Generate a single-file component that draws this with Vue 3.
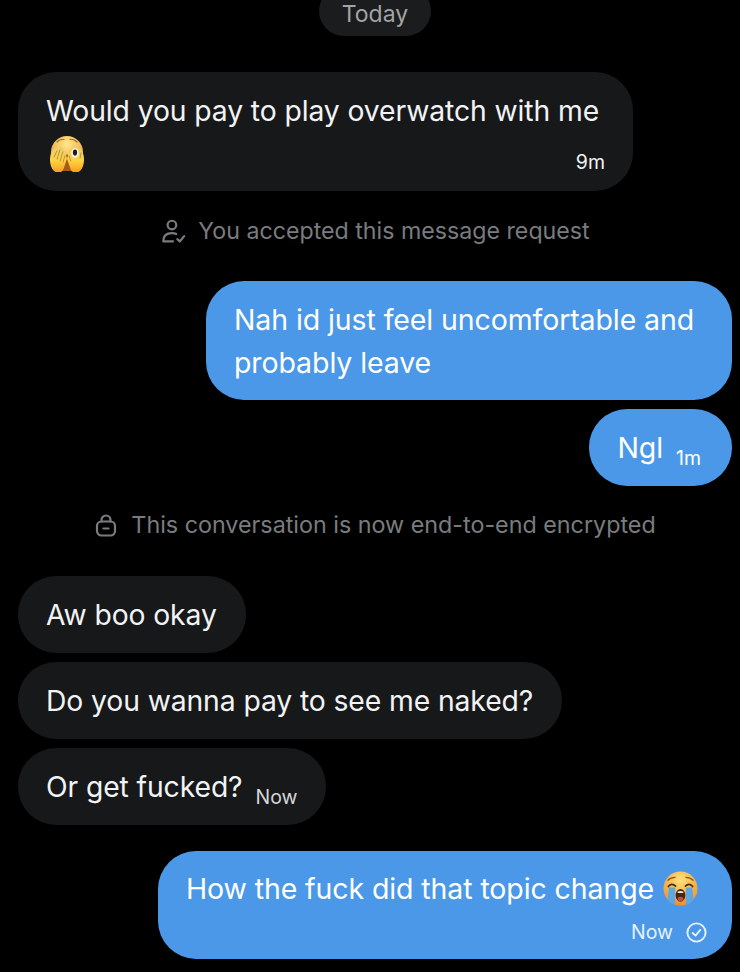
<script setup>
</script>

<template>
  <main class="chat">
    <div class="date-row"><span class="date">Today</span></div>

    <section class="bubble in first">
      <div class="line">Would you pay to play overwatch with me</div>
      <div class="line split">
        <svg class="emoji" viewBox="0 0 36 36" aria-hidden="true">
          <defs>
            <radialGradient id="faceA" cx="50%" cy="25%" r="80%">
              <stop offset="0" stop-color="#ffe88a" />
              <stop offset="1" stop-color="#e8932a" />
            </radialGradient>
            <linearGradient id="handA" x1="0" y1="0" x2="0" y2="1">
              <stop offset="0" stop-color="#e8cd76" />
              <stop offset="0.55" stop-color="#ffd23f" />
              <stop offset="1" stop-color="#f59a22" />
            </linearGradient>
          </defs>
          <circle cx="18" cy="16" r="16" fill="url(#faceA)" />
          <path d="M24 26l-6-8-6 8-1 9h14z" fill="#a55a1e" />
          <g transform="translate(0 1.500)">
            <path d="M1 22C1 15 4 10 10 9c3 0 5 3 6 6l2 6-3 9c-1 4-4 6-7 5-4-1-7-6-7-13z" fill="url(#handA)" />
            <path d="M35 22c0-7-3-12-9-13-3 0-5 3-6 6l-2 6 3 9c1 4 4 6 7 5 4-1 7-6 7-13z" fill="url(#handA)" />
            <path d="M5 20l3-7M8 22l3-10M11 24l3-10M14 25l2-7" stroke="#b98a38" stroke-width=".9" fill="none" />
            <path d="M20 18l2 6M32 15l-1 6" stroke="#b98a38" stroke-width=".9" fill="none" />
            <ellipse cx="26" cy="15.500" rx="3.800" ry="5" fill="#f6f1df" />
            <ellipse cx="26" cy="15" rx="2.100" ry="3.100" fill="#241a10" />
          </g>
          <path d="M8 6c2-2 5-3 7-2.500M28 6c-2-2-5-3-7-2.500" stroke="#9a6a28" stroke-width="1.100" fill="none" stroke-linecap="round" />
        </svg>
        <time class="stamp">9m</time>
      </div>
    </section>

    <p class="notice accepted">
      <svg class="notice-icon" viewBox="0 0 24 24" fill="none" stroke="currentColor" stroke-width="2" stroke-linecap="round" stroke-linejoin="round" aria-hidden="true">
        <circle cx="11" cy="6.500" r="4" />
        <path d="M3 21.500c0-5 3-7.500 8-7.500 1.500 0 3 .3 4 .8M3 21.500h9" />
        <path d="M16 19.500l2.300 2.200 4-5" />
      </svg>
      You accepted this message request
    </p>

    <section class="bubble out second">
      <div class="line">Nah id just feel uncomfortable and</div>
      <div class="line">probably leave</div>
    </section>
    <section class="bubble out tight inline">
      <span class="line">Ngl</span>
      <time class="stamp low">1m</time>
    </section>

    <p class="notice encrypted">
      <svg class="notice-icon lock" viewBox="0 0 24 24" fill="none" stroke="currentColor" stroke-width="2.200" stroke-linecap="round" stroke-linejoin="round" aria-hidden="true">
        <rect x="3" y="8.500" width="18" height="14" rx="4.500" />
        <path d="M7.500 8.500V7a4.500 4.500 0 0 1 9 0v1.500" />
        <path d="M9.500 15.500h5" />
      </svg>
      This conversation is now end-to-end encrypted
    </p>

    <section class="bubble in"><span class="line">Aw boo okay</span></section>
    <section class="bubble in tight"><span class="line">Do you wanna pay to see me naked?</span></section>
    <section class="bubble in tight inline">
      <span class="line">Or get fucked?</span>
      <time class="stamp low">Now</time>
    </section>

    <section class="bubble out last">
      <div class="line with-emoji">
        How the fuck did that topic change
        <svg class="emoji small" viewBox="0 0 36 36" aria-hidden="true">
          <defs>
            <radialGradient id="faceB" cx="50%" cy="25%" r="80%">
              <stop offset="0" stop-color="#ffe27a" />
              <stop offset="1" stop-color="#ef8a24" />
            </radialGradient>
            <clipPath id="faceClip"><circle cx="18" cy="18" r="17.500" /></clipPath>
          </defs>
          <circle cx="18" cy="18" r="17.500" fill="url(#faceB)" />
          <path d="M5 9.500c2-2 5-3 7.500-3M31 9.500c-2-2-5-3-7.500-3" stroke="#8a5a20" stroke-width="1.300" fill="none" stroke-linecap="round" />
          <g clip-path="url(#faceClip)">
            <path d="M6 17h6.500v19H4z" fill="#5aa9e6" />
            <path d="M23.500 17H30l2 19h-8.500z" fill="#5aa9e6" />
          </g>
          <path d="M5.500 16c2-3 5-3 7.500-.5M23 15.500c2.500-2.500 5.500-2.500 7.500.5" stroke="#4a2c12" stroke-width="1.700" fill="none" stroke-linecap="round" />
          <ellipse cx="18" cy="25" rx="5" ry="6.500" fill="#4a2412" />
          <path d="M14.800 21.300c1.800-1 4.600-1 6.400 0l-.5 1.300h-5.400z" fill="#efe9dc" />
          <ellipse cx="18" cy="28.800" rx="3" ry="2.200" fill="#b8504c" />
        </svg>
      </div>
      <div class="status">
        <time class="stamp">Now</time>
        <svg class="check" viewBox="0 0 24 24" fill="none" stroke="currentColor" stroke-width="2" stroke-linecap="round" stroke-linejoin="round" aria-hidden="true">
          <circle cx="12" cy="12" r="9.500" />
          <path d="M8 12.500l3 2.800 5-6" />
        </svg>
      </div>
    </section>
  </main>
</template>

<style>
html, body { margin: 0; background: #000; }
</style>

<style scoped>
.chat {
  box-sizing: border-box;
  width: 740px;
  height: 972px;
  overflow: hidden;
  background: #000;
  color: #f2f3f4;
  display: flex;
  flex-direction: column;
  padding: 0 8px 0 18px;
  font-family: Inter, "Liberation Sans", sans-serif;
  font-size: 28.5px;
  line-height: 43px;
  letter-spacing: -0.1px;
}
.date-row { display: flex; justify-content: center; height: 36px; margin: 0 -8px 0 -18px; padding-left: 10px; }
.date {
  width: 112px;
  height: 50px;
  margin-top: -14px;
  padding-top: 14px;
  box-sizing: border-box;
  text-align: center;
  border-radius: 25px;
  background: #1b1c1e;
  color: #a2a4a6;
  font-size: 23px;
  line-height: 28px;
  letter-spacing: 0;
}
.bubble {
  box-sizing: border-box;
  width: fit-content;
  padding: 17px 28px;
  border-radius: 38px;
}
.in { background: #17181a; align-self: flex-start; font-size: 28.3px; padding: 18px 29px 16px 28px; }
.out { background: #4b98e8; align-self: flex-end; color: #fff; }
.first { width: 615px; margin-top: 36px; padding-right: 28px; }
.second { width: 526px; padding-bottom: 16px; }
.tight { margin-top: 9px; }
.line { display: block; }
.split { display: flex; justify-content: space-between; align-items: center; height: 43px; margin-top: -1px; }
.inline { display: flex; align-items: baseline; gap: 13px; }
.out.inline { padding-right: 31px; }
.stamp { font-size: 19.5px; letter-spacing: 0; line-height: 24px; }
.low { position: relative; top: 7px; }
.in .low { color: #d4d6d8; }
.split .stamp { padding-top: 16px; }
.emoji { width: 36px; height: 36px; display: block; }
.split .emoji { margin-left: 3px; }
.notice {
  margin: 0;
  display: flex;
  align-items: center;
  justify-content: center;
  gap: 12px;
  color: #797c7f;
  font-size: 23.200px;
  line-height: 30px;
  letter-spacing: 0;
  height: 30px;
}
.accepted { margin-top: 25px; margin-bottom: 35px; }
.encrypted { margin-top: 24px; margin-bottom: 36px; gap: 13px; font-size: 23.300px; }
.notice-icon { width: 26px; height: 26px; flex: none; }
.lock { width: 24px; height: 24px; }
.last { margin-top: 26px; width: 574px; padding-top: 16px; padding-bottom: 15px; }
.with-emoji { display: flex; justify-content: space-between; align-items: center; white-space: nowrap; }
.small { width: 35px; height: 35px; margin-right: 6px; }
.status { display: flex; justify-content: flex-end; align-items: center; gap: 12px; margin-top: 10px; margin-right: -4px; color: #e6f1fc; }
.check { width: 23px; height: 23px; display: block; }
</style>
